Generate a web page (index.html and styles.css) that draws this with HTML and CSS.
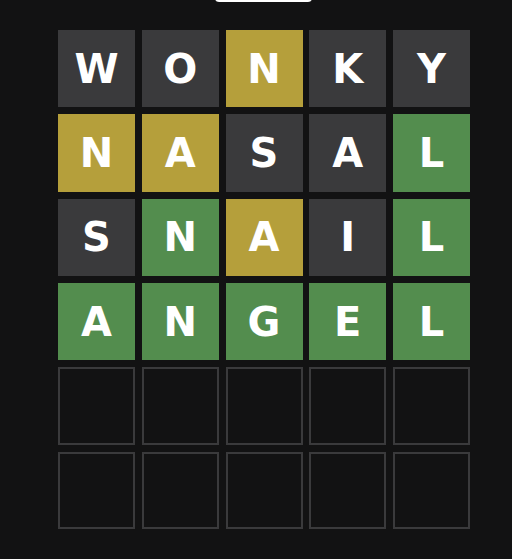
FILE: index.html
```html
<!DOCTYPE html>
<html>
<head>
<meta charset="utf-8">
<link rel="stylesheet" href="styles.css">
</head>
<body>
<div class="toast"></div>
<main class="page">
  <div class="board">
    <div class="tile absent">W</div><div class="tile absent">O</div><div class="tile present">N</div><div class="tile absent">K</div><div class="tile absent">Y</div>
    <div class="tile present">N</div><div class="tile present">A</div><div class="tile absent">S</div><div class="tile absent">A</div><div class="tile correct">L</div>
    <div class="tile absent">S</div><div class="tile correct">N</div><div class="tile present">A</div><div class="tile absent">I</div><div class="tile correct">L</div>
    <div class="tile correct">A</div><div class="tile correct">N</div><div class="tile correct">G</div><div class="tile correct">E</div><div class="tile correct">L</div>
    <div class="tile empty"></div><div class="tile empty"></div><div class="tile empty"></div><div class="tile empty"></div><div class="tile empty"></div>
    <div class="tile empty"></div><div class="tile empty"></div><div class="tile empty"></div><div class="tile empty"></div><div class="tile empty"></div>
  </div>
</main>
</body>
</html>
```

FILE: styles.css
```css
html, body {
  margin: 0;
  padding: 0;
  background: #121213;
  height: 100%;
  overflow: hidden;
}
.page {
  padding: 30px 0 0 58px;
}
.board {
  width: 412px;
  height: 499px;
  display: grid;
  grid-template-columns: repeat(5, 1fr);
  grid-template-rows: repeat(6, 1fr);
  column-gap: 6.75px;
  row-gap: 7px;
}
.tile {
  display: flex;
  align-items: center;
  justify-content: center;
  color: #ffffff;
  font-family: "DejaVu Sans", "Liberation Sans", sans-serif;
  font-weight: bold;
  font-size: 40px;
  line-height: 1;
  box-sizing: border-box;
}
.absent { background: #3a3a3c; }
.present { background: #b59f3b; }
.correct { background: #538d4e; }
.empty { border: 2px solid #3a3a3c; }
.toast {
  position: absolute;
  left: 215px;
  top: -30px;
  width: 97px;
  height: 32px;
  background: #ffffff;
  border-radius: 4px;
}
```
